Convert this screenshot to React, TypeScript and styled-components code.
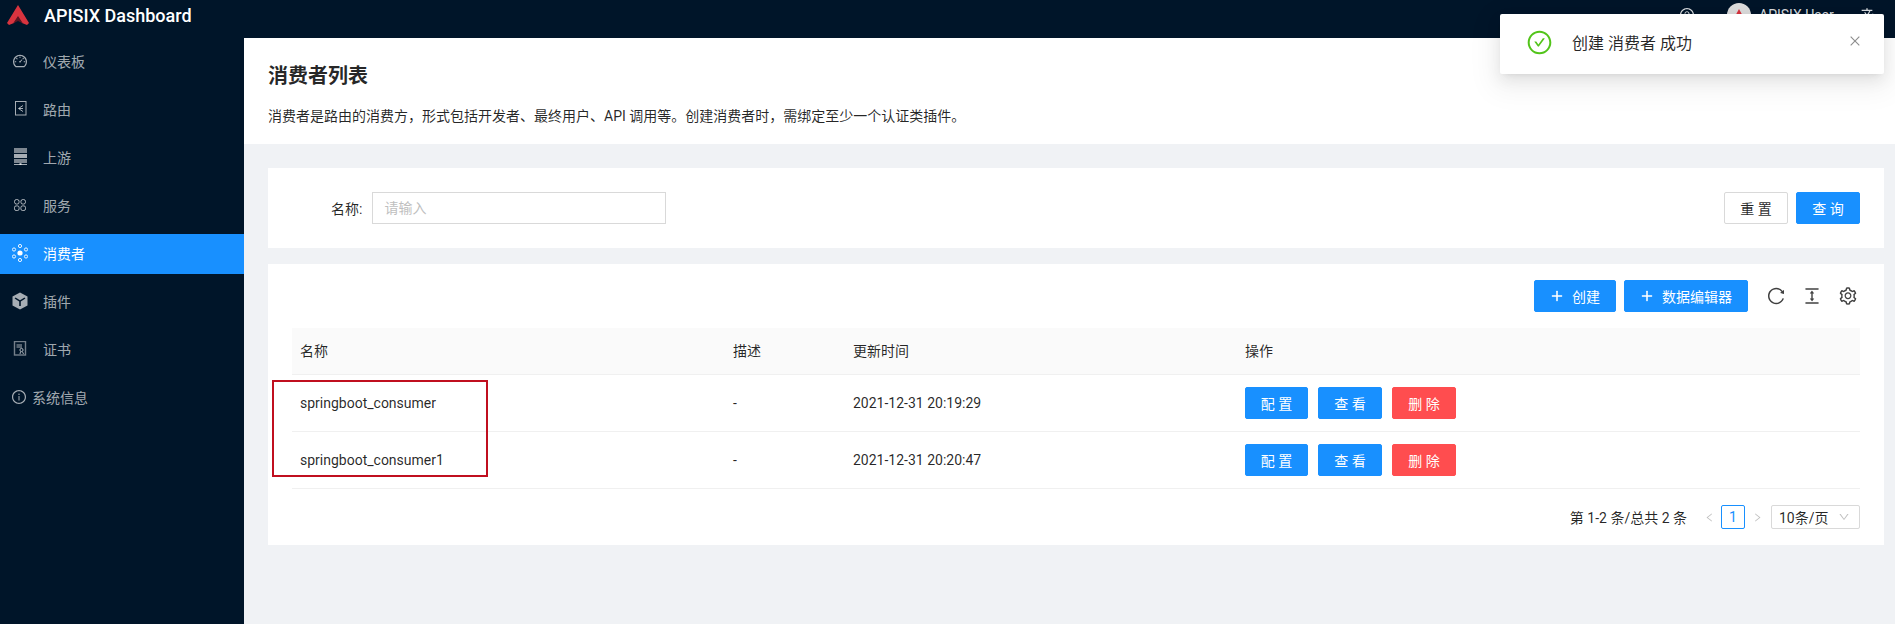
import * as React from "react";
import styled, { createGlobalStyle } from "styled-components";
import {
  AiOutlineCheckCircle,
  AiOutlineClose,
  AiOutlineColumnHeight,
  AiOutlineDashboard,
  AiOutlineDown,
  AiOutlineInfoCircle,
  AiOutlineLeft,
  AiOutlinePlus,
  AiOutlineQuestionCircle,
  AiOutlineReload,
  AiOutlineRight,
  AiOutlineSetting
} from "react-icons/ai";
import { MdTranslate } from "react-icons/md";

const GlobalStyle = createGlobalStyle`
  html, body {
    margin: 0;
    padding: 0;
    height: 624px;
    overflow: hidden;
    background: #f0f2f5;
    font-family: Roboto, "Noto Sans CJK SC", sans-serif;
    font-size: 14px;
    color: rgba(0, 0, 0, 0.85);
  }
  * {
    box-sizing: border-box;
  }
`;

const Logo = () => (
  <svg width="24" height="21" viewBox="0 0 24 21">
    <path d="M12 0 L23 18 L21 20 L16 18 L12 12 L8 18 L3 20 L1 18 Z" fill="#d8343f" />
    <path d="M12 11 L17 18.5 L12 16 L7 18.5 Z" fill="#5e1522" />
  </svg>
);

const RouteIcon = () => (
  <svg width="13" height="15" viewBox="0 0 13 15" fill="none" stroke="currentColor">
    <rect x="1.5" y="0.5" width="10.5" height="13.5" />
    <path d="M9 4.5 L4.5 7.5 L9 10.5 M5 7.5 H9" />
  </svg>
);

const UpstreamIcon = () => (
  <svg width="15" height="18" viewBox="0 0 15 18" fill="currentColor">
    <rect x="1" y="0" width="13" height="5" opacity="0.75" />
    <rect x="1" y="6" width="13" height="4" />
    <rect x="1" y="11" width="13" height="4" opacity="0.75" />
    <rect x="6.5" y="15" width="2" height="2" />
    <rect x="1" y="16" width="13" height="1" />
  </svg>
);

const ServiceIcon = () => (
  <svg width="12" height="12" viewBox="0 0 12 12" fill="none" stroke="currentColor">
    <rect x="0.5" y="0.5" width="4.6" height="4.6" rx="2" />
    <rect x="6.9" y="0.5" width="4.6" height="4.6" rx="2" />
    <rect x="0.5" y="6.9" width="4.6" height="4.6" rx="1.6" />
    <rect x="6.9" y="6.9" width="4.6" height="4.6" rx="1.6" />
  </svg>
);

const ConsumerIcon = () => (
  <svg width="16" height="18" viewBox="0 0 16 18" fill="none" stroke="currentColor" strokeWidth="0.9">
    <circle cx="8" cy="9" r="2.6" fill="currentColor" stroke="none" />
    <circle cx="8" cy="2" r="1.6" />
    <circle cx="8" cy="16" r="1.6" />
    <circle cx="2" cy="5.5" r="1.6" />
    <circle cx="14" cy="5.5" r="1.6" />
    <circle cx="2" cy="12.5" r="1.6" />
    <circle cx="14" cy="12.5" r="1.6" />
  </svg>
);

const PluginIcon = () => (
  <svg width="16" height="18" viewBox="0 0 16 18" fill="currentColor">
    <path
      fillRule="evenodd"
      d="M8 0.5 L15.5 4.5 V13.5 L8 17.5 L0.5 13.5 V4.5 Z M3.5 5.5 L2.6 6.6 L7.2 9.6 V14 H8.8 V9.6 L13.4 6.6 L12.5 5.5 L8 8.2 Z"
    />
  </svg>
);

const CertIcon = () => (
  <svg width="14" height="15" viewBox="0 0 14 15" fill="none" stroke="currentColor">
    <rect x="1.5" y="0.5" width="11" height="13.5" strokeWidth="1.4" opacity="0.7" />
    <rect x="3.5" y="3" width="5.5" height="4" fill="currentColor" fillOpacity="0.5" stroke="none" />
    <circle cx="8.5" cy="9" r="1.6" />
    <path d="M7.5 10.8 L7 13 M9.5 10.8 L10.5 13" />
  </svg>
);

const Header = styled.header`
  height: 38px;
  background: #001529;
  display: flex;
  align-items: flex-start;
  color: rgba(255, 255, 255, 0.85);
`;

const Brand = styled.div`
  display: flex;
  align-items: center;
  height: 30px;
  padding-left: 6px;
  gap: 14px;
  color: #fff;
  font-size: 18px;
  font-weight: 500;
  flex: 1;
`;

const HeaderRight = styled.div`
  display: flex;
  align-items: center;
  height: 30px;
`;

const HeaderIcon = styled.span`
  display: flex;
  font-size: 16px;
  margin-right: 32px;
`;

const Avatar = styled.span`
  width: 24px;
  height: 24px;
  border-radius: 50%;
  background: #dcdcdc;
  display: flex;
  align-items: center;
  justify-content: center;
  margin-right: 8px;
`;

const UserName = styled.span`
  font-size: 14px;
  width: 71px;
  white-space: nowrap;
  margin-right: 31px;
`;

const Lang = styled.span`
  display: flex;
  font-size: 16px;
  margin-right: 18px;
`;

const Body = styled.div`
  display: flex;
  height: 586px;
`;

const Sidebar = styled.nav`
  width: 244px;
  flex: none;
  background: #001529;
  padding-top: 4px;
  color: rgba(255, 255, 255, 0.65);
`;

const MenuItem = styled.div<{ $active?: boolean }>`
  height: 40px;
  margin-bottom: 8px;
  display: flex;
  align-items: center;
  padding: 0 0 2px 12px;
  background: ${(p) => (p.$active ? "#1890ff" : "transparent")};
  color: ${(p) => (p.$active ? "#fff" : "inherit")};
`;

const MenuIcon = styled.span`
  width: 16px;
  height: 18px;
  margin-right: 15px;
  margin-bottom: 1px;
  display: flex;
  align-items: center;
  justify-content: center;
  font-size: 16px;
`;

const InfoItem = styled(MenuItem)`
  padding-left: 11px;
  gap: 5px;
`;

const Main = styled.main`
  flex: 1;
  min-width: 0;
`;

const PageHead = styled.section`
  background: #fff;
  height: 106px;
  padding: 25px 24px 0;
`;

const Title = styled.h1`
  margin: 0;
  font-size: 20px;
  line-height: 26px;
  font-weight: 700;
  color: rgba(0, 0, 0, 0.85);
`;

const Desc = styled.p`
  margin: 16px 0 0;
  line-height: 22px;
`;

const Content = styled.div`
  padding: 24px 11px 0 24px;
`;

const SearchCard = styled.section`
  height: 80px;
  background: #fff;
  padding: 24px;
  display: flex;
  justify-content: space-between;
  margin-bottom: 16px;
`;

const Field = styled.label`
  display: flex;
  align-items: center;
  padding-left: 39px;
  gap: 10px;
`;

const FieldInput = styled.input`
  width: 294px;
  height: 32px;
  border: 1px solid #d9d9d9;
  padding: 0 11px;
  font: inherit;
  outline: none;
  &::placeholder {
    color: #bfbfbf;
  }
`;

const ButtonRow = styled.div`
  display: flex;
  gap: 8px;
`;

const Button = styled.button<{ $kind?: "primary" | "danger" | "plain"; $w: number }>`
  width: ${(p) => p.$w}px;
  height: 32px;
  padding: 0;
  border-radius: 2px;
  font: inherit;
  display: flex;
  align-items: center;
  justify-content: center;
  gap: 8px;
  border: 1px solid
    ${(p) => (p.$kind === "danger" ? "#ff4d4f" : p.$kind === "plain" ? "#d9d9d9" : "#1890ff")};
  background: ${(p) => (p.$kind === "danger" ? "#ff4d4f" : p.$kind === "plain" ? "#fff" : "#1890ff")};
  color: ${(p) => (p.$kind === "plain" ? "rgba(0,0,0,.85)" : "#fff")};
  svg {
    stroke: currentColor;
    stroke-width: 40;
  }
`;

const TableCard = styled.section`
  height: 281px;
  background: #fff;
  padding: 16px 24px 0;
`;

const Toolbar = styled.div`
  display: flex;
  justify-content: flex-end;
  align-items: center;
  height: 32px;
  margin-bottom: 16px;
`;

const ToolIcons = styled.div`
  display: flex;
  gap: 16px;
  font-size: 20px;
  margin-left: 18px;
  margin-right: 2px;
  color: rgba(0, 0, 0, 0.75);
  svg {
    display: block;
  }
`;

const Grid = styled.div`
  display: grid;
  grid-template-columns: 433px 120px 392px 1fr;
`;

const Cell = styled.div<{ $head?: boolean }>`
  height: ${(p) => (p.$head ? 47 : 57)}px;
  padding: 0 8px ${(p) => (p.$head ? 2 : 0)}px;
  display: flex;
  align-items: center;
  gap: 10px;
  border-bottom: 1px solid #f0f0f0;
  background: ${(p) => (p.$head ? "#fafafa" : "#fff")};
`;

const Pager = styled.div`
  display: flex;
  justify-content: flex-end;
  align-items: center;
  height: 24px;
  margin-top: 16px;
`;

const PagerTotal = styled.span`
  margin-right: 10px;
`;

const PagerArrow = styled.span`
  width: 24px;
  display: flex;
  justify-content: center;
  font-size: 11px;
  color: rgba(0, 0, 0, 0.25);
`;

const PagerItem = styled.span`
  width: 24px;
  height: 24px;
  border: 1px solid #1890ff;
  border-radius: 2px;
  color: #1890ff;
  display: flex;
  align-items: center;
  justify-content: center;
`;

const PagerSelect = styled.span`
  width: 89px;
  height: 24px;
  margin-left: 2px;
  border: 1px solid #d9d9d9;
  border-radius: 2px;
  display: flex;
  align-items: center;
  justify-content: space-between;
  padding: 0 9px 0 7px;
  svg {
    color: rgba(0, 0, 0, 0.25);
    font-size: 12px;
  }
`;

const Notice = styled.div`
  position: absolute;
  left: 1500px;
  top: 14px;
  width: 384px;
  height: 60px;
  background: #fff;
  border-radius: 2px;
  box-shadow: 0 3px 6px -4px rgba(0, 0, 0, 0.12), 0 6px 16px rgba(0, 0, 0, 0.08),
    0 9px 28px 8px rgba(0, 0, 0, 0.05);
  display: flex;
  align-items: center;
  padding: 0 0 4px 26px;
  font-size: 16px;
`;

const NoticeIcon = styled.span`
  display: flex;
  font-size: 27px;
  color: #52c41a;
  margin-right: 19px;
`;

const NoticeClose = styled.span`
  position: absolute;
  right: 22px;
  top: 20px;
  display: flex;
  font-size: 14px;
  color: rgba(0, 0, 0, 0.45);
`;

const Highlight = styled.div`
  position: absolute;
  left: 272px;
  top: 380px;
  width: 216px;
  height: 97px;
  border: 2px solid #c00f1f;
  pointer-events: none;
`;

const menu = [
  { label: "仪表板", icon: <AiOutlineDashboard /> },
  { label: "路由", icon: <RouteIcon /> },
  { label: "上游", icon: <UpstreamIcon /> },
  { label: "服务", icon: <ServiceIcon /> },
  { label: "消费者", icon: <ConsumerIcon />, active: true },
  { label: "插件", icon: <PluginIcon /> },
  { label: "证书", icon: <CertIcon /> }
];

const consumers = [
  { name: "springboot_consumer", time: "2021-12-31 20:19:29" },
  { name: "springboot_consumer1", time: "2021-12-31 20:20:47" }
];

export default function App() {
  return (
    <>
      <GlobalStyle />
      <Header>
        <Brand>
          <Logo />
          APISIX Dashboard
        </Brand>
        <HeaderRight>
          <HeaderIcon>
            <AiOutlineQuestionCircle />
          </HeaderIcon>
          <Avatar>
            <svg width="14" height="14" viewBox="0 0 14 14">
              <path d="M7 1 L13 12 L7 9 L1 12 Z" fill="#d8343f" />
            </svg>
          </Avatar>
          <UserName>APISIX User</UserName>
          <Lang>
            <MdTranslate />
          </Lang>
        </HeaderRight>
      </Header>
      <Body>
        <Sidebar>
          {menu.map((item) => (
            <MenuItem key={item.label} $active={item.active}>
              <MenuIcon>{item.icon}</MenuIcon>
              {item.label}
            </MenuItem>
          ))}
          <InfoItem>
            <AiOutlineInfoCircle size={16} />
            系统信息
          </InfoItem>
        </Sidebar>
        <Main>
          <PageHead>
            <Title>消费者列表</Title>
            <Desc>消费者是路由的消费方，形式包括开发者、最终用户、API 调用等。创建消费者时，需绑定至少一个认证类插件。</Desc>
          </PageHead>
          <Content>
            <SearchCard>
              <Field>
                名称:
                <FieldInput placeholder="请输入" />
              </Field>
              <ButtonRow>
                <Button $kind="plain" $w={64}>重 置</Button>
                <Button $kind="primary" $w={64}>查 询</Button>
              </ButtonRow>
            </SearchCard>
            <TableCard>
              <Toolbar>
                <ButtonRow>
                  <Button $kind="primary" $w={82}>
                    <AiOutlinePlus />
                    创建
                  </Button>
                  <Button $kind="primary" $w={124}>
                    <AiOutlinePlus />
                    数据编辑器
                  </Button>
                </ButtonRow>
                <ToolIcons>
                  <AiOutlineReload />
                  <AiOutlineColumnHeight />
                  <AiOutlineSetting />
                </ToolIcons>
              </Toolbar>
              <Grid>
                <Cell $head>名称</Cell>
                <Cell $head>描述</Cell>
                <Cell $head>更新时间</Cell>
                <Cell $head>操作</Cell>
                {consumers.map((c) => (
                  <React.Fragment key={c.name}>
                    <Cell>{c.name}</Cell>
                    <Cell>-</Cell>
                    <Cell>{c.time}</Cell>
                    <Cell>
                      <Button $kind="primary" $w={63}>配 置</Button>
                      <Button $kind="primary" $w={64}>查 看</Button>
                      <Button $kind="danger" $w={64}>删 除</Button>
                    </Cell>
                  </React.Fragment>
                ))}
              </Grid>
              <Pager>
                <PagerTotal>第 1-2 条/总共 2 条</PagerTotal>
                <PagerArrow><AiOutlineLeft /></PagerArrow>
                <PagerItem>1</PagerItem>
                <PagerArrow><AiOutlineRight /></PagerArrow>
                <PagerSelect>10条/页<AiOutlineDown /></PagerSelect>
              </Pager>
            </TableCard>
          </Content>
        </Main>
      </Body>
      <Highlight />
      <Notice>
        <NoticeIcon><AiOutlineCheckCircle /></NoticeIcon>
        创建 消费者 成功
        <NoticeClose><AiOutlineClose /></NoticeClose>
      </Notice>
    </>
  );
}
